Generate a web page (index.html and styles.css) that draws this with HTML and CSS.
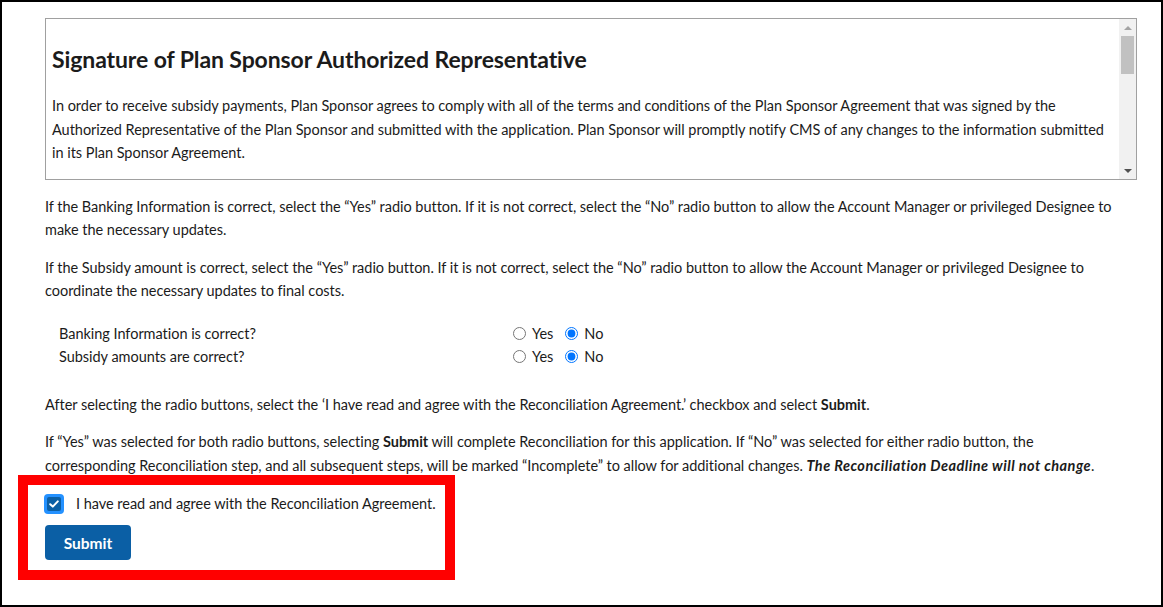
FILE: index.html
```html
<!DOCTYPE html>
<html lang="en">
<head>
<meta charset="utf-8">
<title>Reconciliation Agreement</title>
<link rel="stylesheet" href="styles.css">
</head>
<body>
<main class="page">
  <section class="agreement">
    <div class="agreement-content">
      <h2 class="agreement-title">Signature of Plan Sponsor Authorized Representative</h2>
      <p class="agreement-text">In order to receive subsidy payments, Plan Sponsor agrees to comply with all of the terms and conditions of the Plan Sponsor Agreement that was signed by the Authorized Representative of the Plan Sponsor and submitted with the application. Plan Sponsor will promptly notify CMS of any changes to the information submitted in its Plan Sponsor Agreement.</p>
      <p class="agreement-text">Plan Sponsor certifies that the information submitted for reconciliation is true, accurate and complete to the best of its knowledge and belief, and acknowledges that the information is being provided to obtain federal funds.</p>
      <p class="agreement-text">Plan Sponsor agrees to maintain records supporting the information submitted and to make them available to CMS upon request.</p>
    </div>
    <div class="scrollbar" aria-hidden="true">
      <span class="sb-btn sb-up"><span class="arrow-up"></span></span>
      <span class="sb-track"><span class="sb-thumb"></span></span>
      <span class="sb-btn sb-down"><span class="arrow-down"></span></span>
    </div>
  </section>

  <p class="text p-first">If the Banking Information is correct, select the “Yes” radio button. If it is not correct, select the “No” radio button to allow the Account Manager or privileged Designee to make the necessary updates.</p>
  <p class="text">If the Subsidy amount is correct, select the “Yes” radio button. If it is not correct, select the “No” radio button to allow the Account Manager or privileged Designee to coordinate the necessary updates to final costs.</p>

  <div class="questions">
    <span class="q-label">Banking Information is correct?</span>
    <span class="q-options">
      <label class="opt"><input type="radio" name="bank" value="yes"><span>Yes</span></label>
      <label class="opt"><input type="radio" name="bank" value="no" checked><span>No</span></label>
    </span>
    <span class="q-label">Subsidy amounts are correct?</span>
    <span class="q-options">
      <label class="opt"><input type="radio" name="subsidy" value="yes"><span>Yes</span></label>
      <label class="opt"><input type="radio" name="subsidy" value="no" checked><span>No</span></label>
    </span>
  </div>

  <p class="text p-after">After selecting the radio buttons, select the ‘I have read and agree with the Reconciliation Agreement.’ checkbox and select <strong>Submit</strong>.</p>
  <p class="text p-last">If “Yes” was selected for both radio buttons, selecting <strong>Submit</strong> will complete Reconciliation for this application. If “No” was selected for either radio button, the corresponding Reconciliation step, and all subsequent steps, will be marked “Incomplete” to allow for additional changes. <strong class="deadline"><em>The Reconciliation Deadline will not change</em></strong>.</p>

  <div class="confirm">
    <label class="check-row">
      <span class="checkbox"><span class="checkbox-inner">
        <svg width="10" height="8" viewBox="0 0 10 8"><path d="M1.2 4.2 L3.8 6.6 L8.8 1.4" fill="none" stroke="#fff" stroke-width="2" stroke-linecap="round" stroke-linejoin="round"/></svg>
      </span></span>
      <span>I have read and agree with the Reconciliation Agreement.</span>
    </label>
    <button class="submit" type="button">Submit</button>
    <span class="highlight" aria-hidden="true"></span>
  </div>
</main>
</body>
</html>
```

FILE: styles.css
```css
* { box-sizing: border-box; }

html, body {
  margin: 0;
  padding: 0;
  background: #fff;
}

body {
  width: 1163px;
  height: 607px;
  border: 2px solid #000;
  overflow: hidden;
  font-family: Lato, "Liberation Sans", sans-serif;
  font-size: 14.5px;
  letter-spacing: -0.03px;
  color: #1b1b1b;
}

.page {
  padding: 16px 24px 0 43px;
  position: relative;
}

/* scroll box */
.agreement {
  display: flex;
  height: 162px;
  border: 1px solid #a0a0a0;
}

.agreement-content {
  flex: 1;
  overflow: hidden;
  padding: 27px 6px 0 6px;
}

.agreement-title {
  margin: 0 0 21px;
  font-size: 23px;
  line-height: 27px;
  font-weight: 700;
  letter-spacing: -0.1px;
  color: #1b1b1b;
}

.agreement-text {
  margin: 0 0 16px;
  line-height: 23.5px;
}

.scrollbar {
  width: 17px;
  flex: none;
  display: flex;
  flex-direction: column;
  background: #f1f1f1;
}

.sb-btn {
  height: 17px;
  flex: none;
  display: flex;
  align-items: center;
  justify-content: center;
}

.arrow-up {
  width: 0;
  height: 0;
  border-left: 4px solid transparent;
  border-right: 4px solid transparent;
  border-bottom: 4px solid #a3a3a3;
}

.arrow-down {
  width: 0;
  height: 0;
  border-left: 4px solid transparent;
  border-right: 4px solid transparent;
  border-top: 4px solid #505050;
}

.sb-track {
  flex: 1;
  padding: 0 2px;
}

.sb-thumb {
  display: block;
  height: 38px;
  background: #c1c1c1;
}

/* body text */
.text {
  margin: 0;
  max-width: 1078px;
  line-height: 23px;
}

.p-first { margin-top: 15px; }
.text + .text { margin-top: 15px; }

.questions {
  display: grid;
  grid-template-columns: 449px auto;
  padding-left: 14px;
  margin-top: 20px;
  line-height: 23px;
}

.q-options {
  display: flex;
  align-items: center;
  gap: 7px;
}

.opt {
  display: inline-flex;
  align-items: center;
}

.opt input {
  margin: 0 3px 0 5px;
  width: 13px;
  height: 13px;
  accent-color: #0075ff;
}

.opt span { margin-left: 3px; }

.p-after { margin-top: 25px !important; }
.p-last { margin-top: 14px !important; line-height: 24px; }

strong { font-weight: 700; }

.deadline { letter-spacing: 0.45px; }

/* confirmation */
.confirm {
  position: relative;
  margin-top: 14px;
}

.check-row {
  display: flex;
  align-items: center;
  gap: 12px;
  line-height: 23px;
  margin-left: -1px;
}

.checkbox {
  width: 20px;
  height: 20px;
  border-radius: 4px;
  background: #2491ff;
  padding: 3px;
  display: flex;
}

.checkbox-inner {
  flex: 1;
  border-radius: 2px;
  background: #0b5fa5;
  display: flex;
  align-items: center;
  justify-content: center;
}

.submit {
  display: block;
  margin-top: 10px;
  height: 35px;
  width: 86px;
  border: 0;
  border-radius: 4px;
  background: #0b5fa5;
  color: #fff;
  font-family: Lato, "Liberation Sans", sans-serif;
  font-size: 15.5px;
  font-weight: 700;
  letter-spacing: 0;
  padding: 0;
}

.highlight {
  position: absolute;
  left: -27px;
  top: -17px;
  width: 437px;
  height: 105px;
  border: 10px solid #ff0000;
  pointer-events: none;
}
```
